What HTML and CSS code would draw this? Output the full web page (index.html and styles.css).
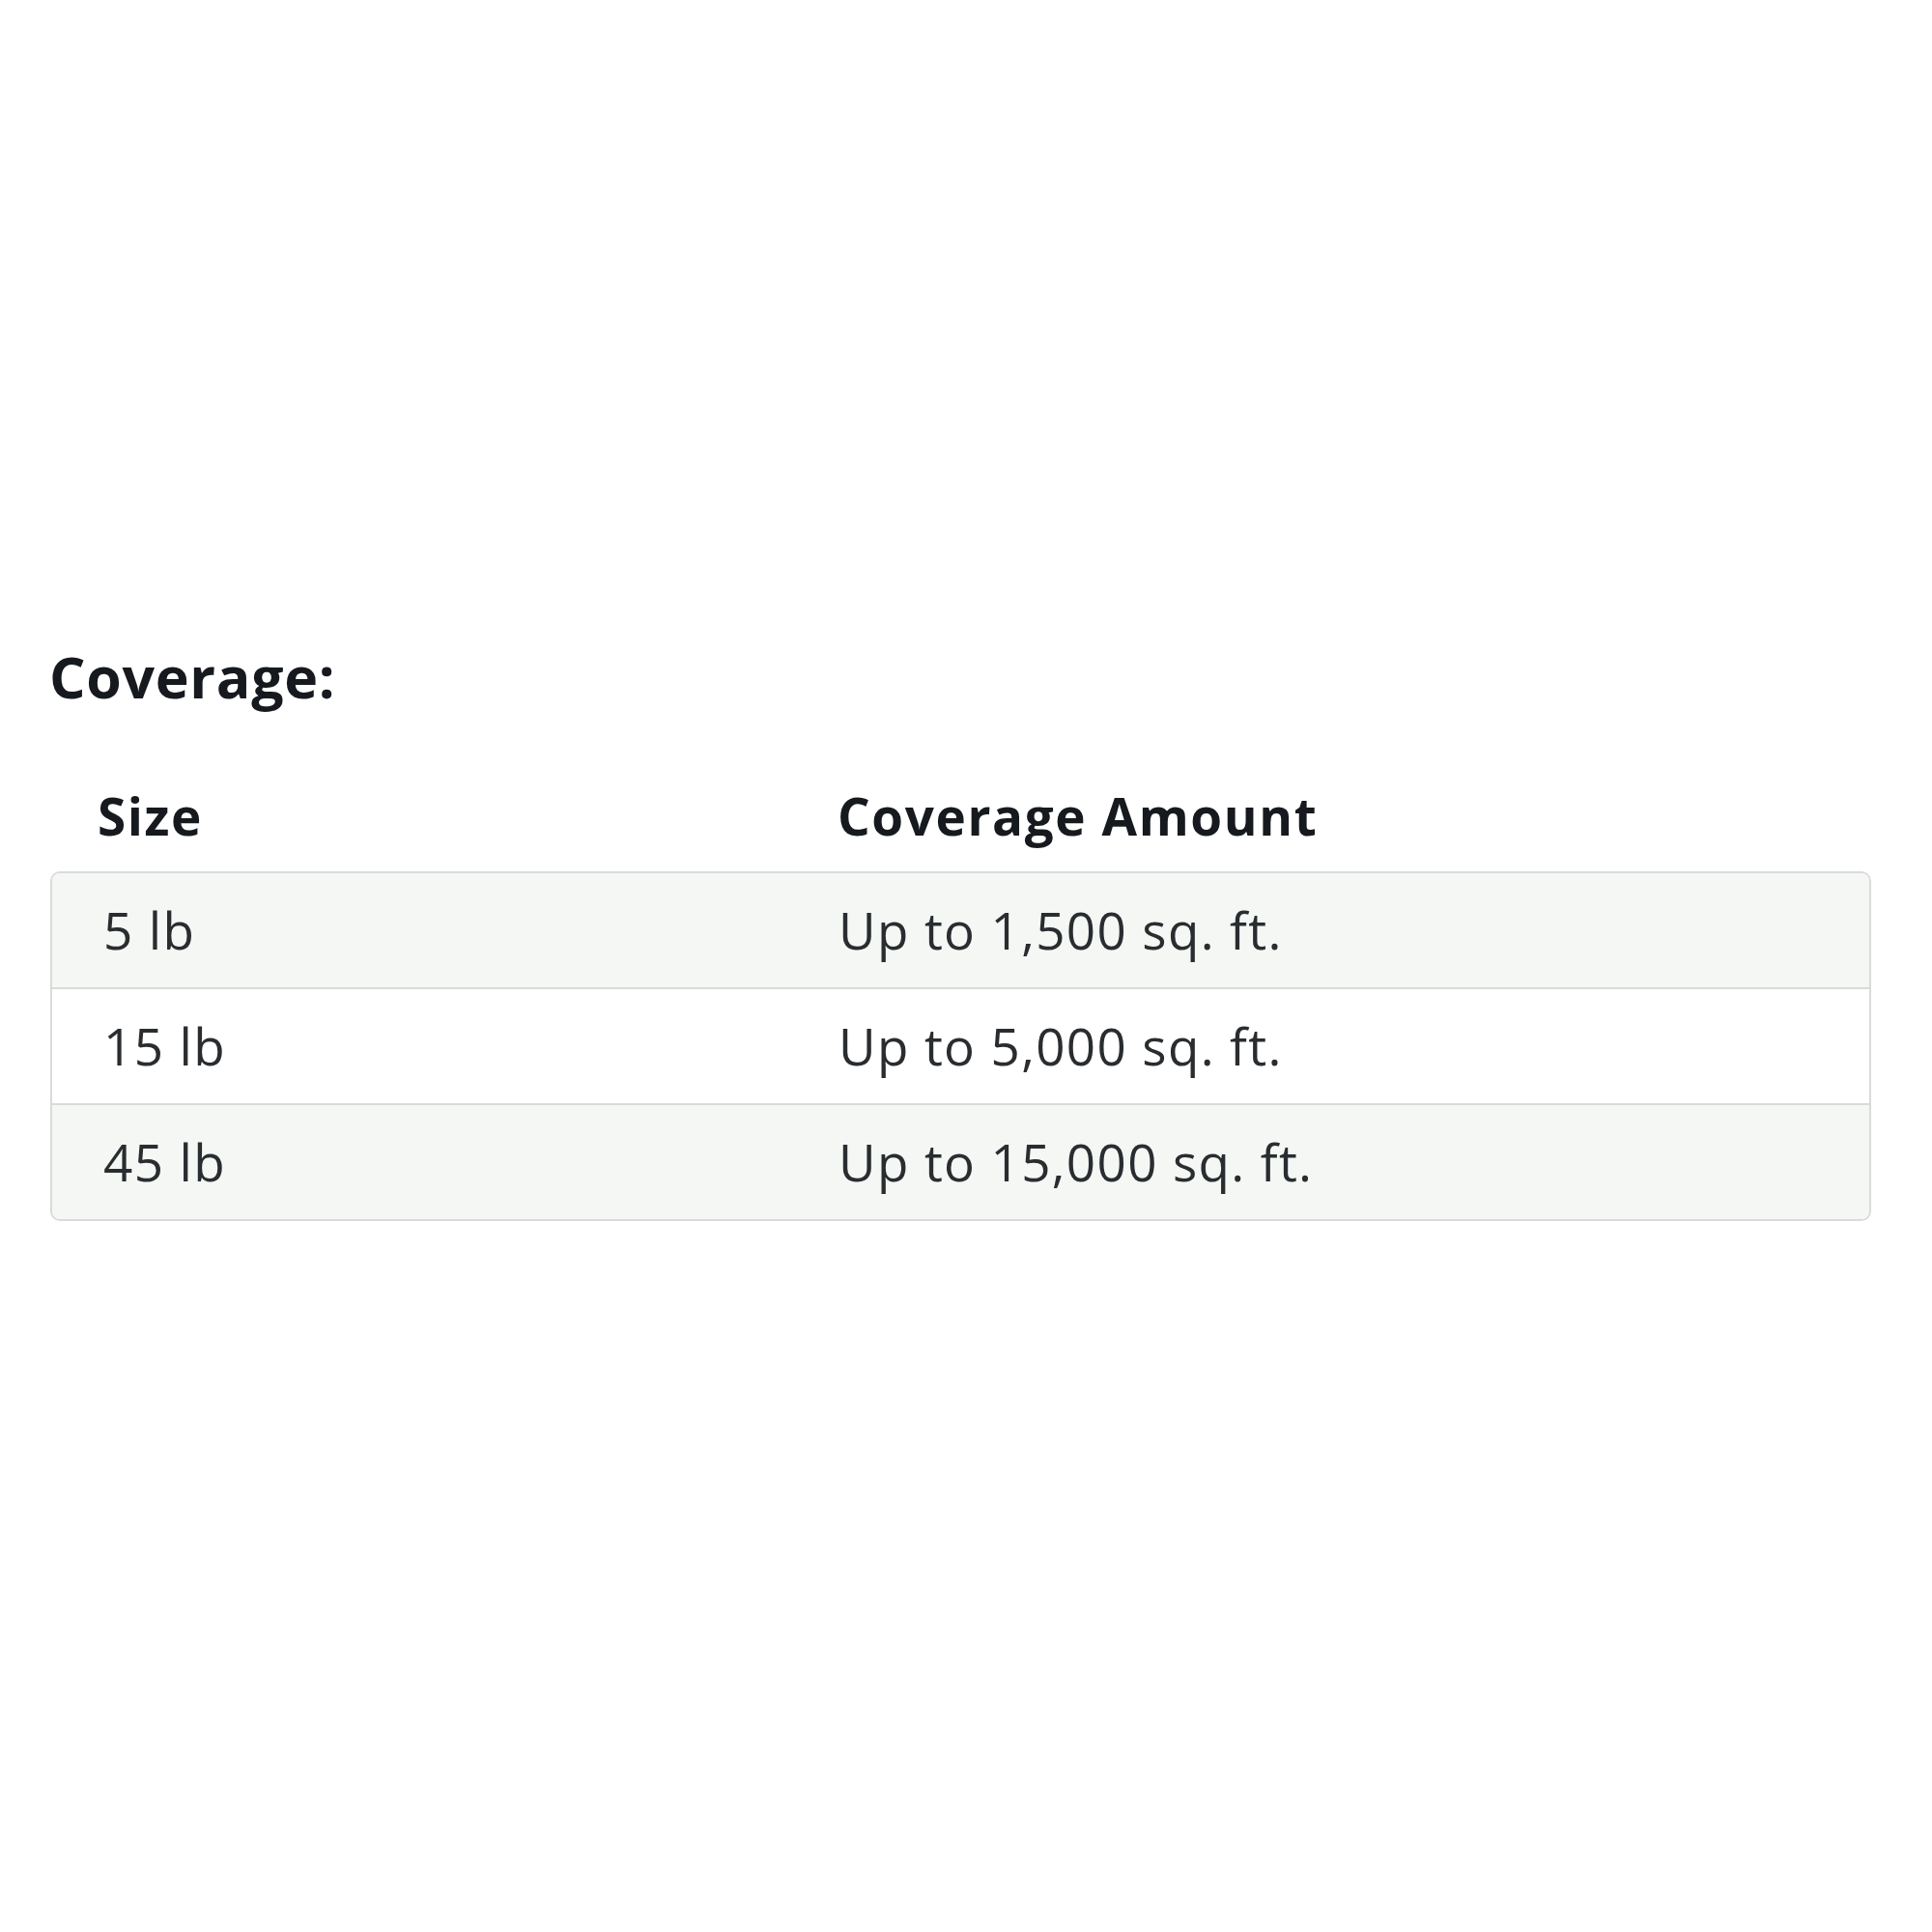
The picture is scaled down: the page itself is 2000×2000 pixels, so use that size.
FILE: index.html
```html
<!DOCTYPE html>
<html>
<head>
<meta charset="utf-8">
<link rel="stylesheet" href="styles.css">
</head>
<body>
<div class="page">
  <h2 class="title">Coverage:</h2>
  <div class="head-row">
    <div class="hcell c1">Size</div>
    <div class="hcell">Coverage Amount</div>
  </div>
  <div class="table">
    <div class="row alt">
      <div class="cell c1">5 lb</div>
      <div class="cell">Up to 1,500 sq. ft.</div>
    </div>
    <div class="row">
      <div class="cell c1">15 lb</div>
      <div class="cell">Up to 5,000 sq. ft.</div>
    </div>
    <div class="row alt">
      <div class="cell c1">45 lb</div>
      <div class="cell">Up to 15,000 sq. ft.</div>
    </div>
  </div>
</div>
</body>
</html>
```
FILE: styles.css
```css
html, body {
  margin: 0;
  padding: 0;
  background: #ffffff;
}
body {
  font-family: "Open Sans", "Noto Sans", sans-serif;
  color: #1f1f1f;
}
.page {
  width: 1885px;
  margin-left: 52px;
  padding-top: 666px;
}
.title {
  margin: 0 0 0 -1px;
  font-size: 59px;
  line-height: 68px;
  font-weight: 700;
  letter-spacing: 0.7px;
  color: #161a1f;
}
.head-row {
  margin-top: 81px;
  display: grid;
  grid-template-columns: 759px 1fr;
  height: 60px;
  padding-bottom: 27px;
}
.hcell {
  font-size: 53px;
  line-height: 60px;
  font-weight: 700;
  letter-spacing: 1.6px;
  color: #161a1f;
  padding-left: 56px;
}
.hcell.c1 {
  padding-left: 49px;
}
.table {
  border: 2px solid #d9dbdb;
  border-radius: 10px;
  overflow: hidden;
}
.row {
  display: grid;
  grid-template-columns: 755px 1fr;
  height: 118px;
  align-items: center;
  background: #ffffff;
}
.row.alt {
  background: #f4f7f4;
}
.row + .row {
  border-top: 2px solid #d9dbdb;
}
.cell {
  font-size: 53px;
  line-height: 60px;
  letter-spacing: 1.35px;
  padding-left: 59px;
  color: #2a2d30;
}
.cell.c1 {
  padding-left: 53px;
}
```
